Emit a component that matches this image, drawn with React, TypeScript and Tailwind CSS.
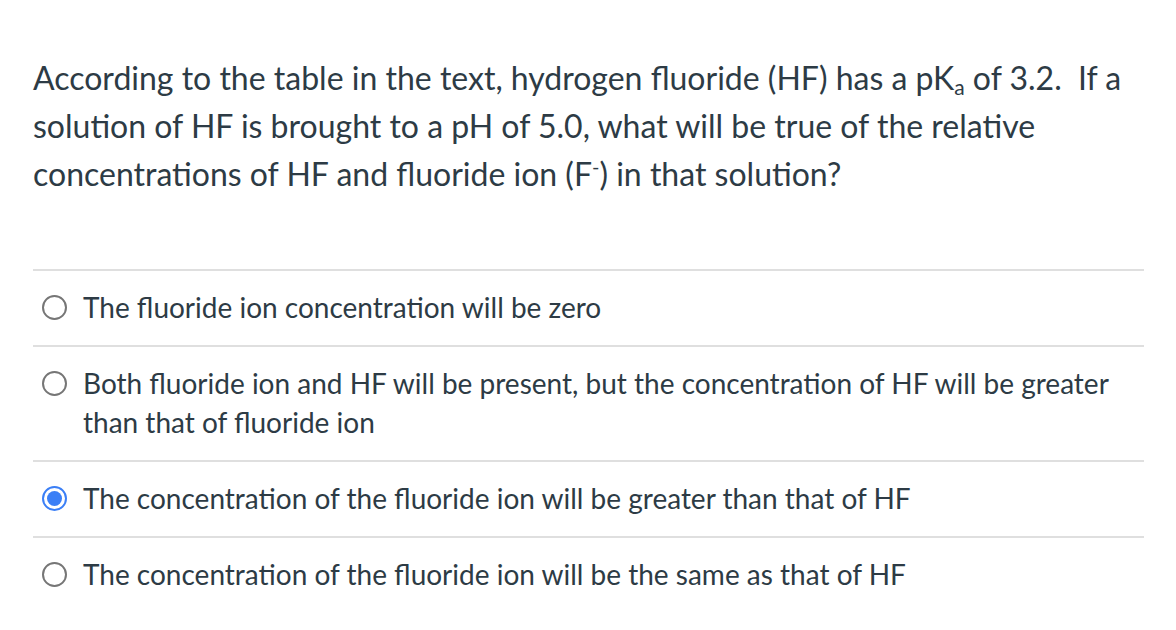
const options = [
  { text: "The fluoride ion concentration will be zero", checked: false },
  {
    text: "Both fluoride ion and HF will be present, but the concentration of HF will be greater than that of fluoride ion",
    checked: false,
  },
  { text: "The concentration of the fluoride ion will be greater than that of HF", checked: true },
  { text: "The concentration of the fluoride ion will be the same as that of HF", checked: false },
];

function Radio({ checked }: { checked: boolean }) {
  if (checked) {
    return (
      <span className="flex h-[25px] w-[25px] shrink-0 items-center justify-center rounded-full border-2 border-[#3b7ff6] bg-white">
        <span className="h-[15px] w-[15px] rounded-full bg-[#3b7ff6]" />
      </span>
    );
  }
  return <span className="h-[25px] w-[25px] shrink-0 rounded-full border-2 border-[#767676] bg-white" />;
}

export default function App() {
  return (
    <div className="min-h-[630px] w-[1176px] bg-white pl-[33px] pr-[32px] pt-[54px] font-['Lato','Liberation_Sans',sans-serif] text-[#2d3b45]">
      <p className="text-[32px] leading-[48px]">
        According to the table in the text, hydrogen fluoride (HF) has a pK
        <span className="relative top-[5px] text-[21px] leading-none">a</span> of 3.2.&nbsp; If a solution of HF is
        brought to a pH of 5.0, what will be true of the relative concentrations of HF and fluoride ion (F
        <span className="relative top-[-12px] text-[20px] leading-none">-</span>) in that solution?
      </p>

      <div className="mt-[71px] w-[1111px]">
        {options.map((o) => (
          <label key={o.text} className="flex gap-[16px] border-t-2 border-[#dfdfdf] pt-[17px] pb-[18px] pl-[9px]">
            <span className="flex h-[39px] items-center">
              <Radio checked={o.checked} />
            </span>
            <span className="text-[28px] leading-[39px]">{o.text}</span>
          </label>
        ))}
      </div>
    </div>
  );
}
